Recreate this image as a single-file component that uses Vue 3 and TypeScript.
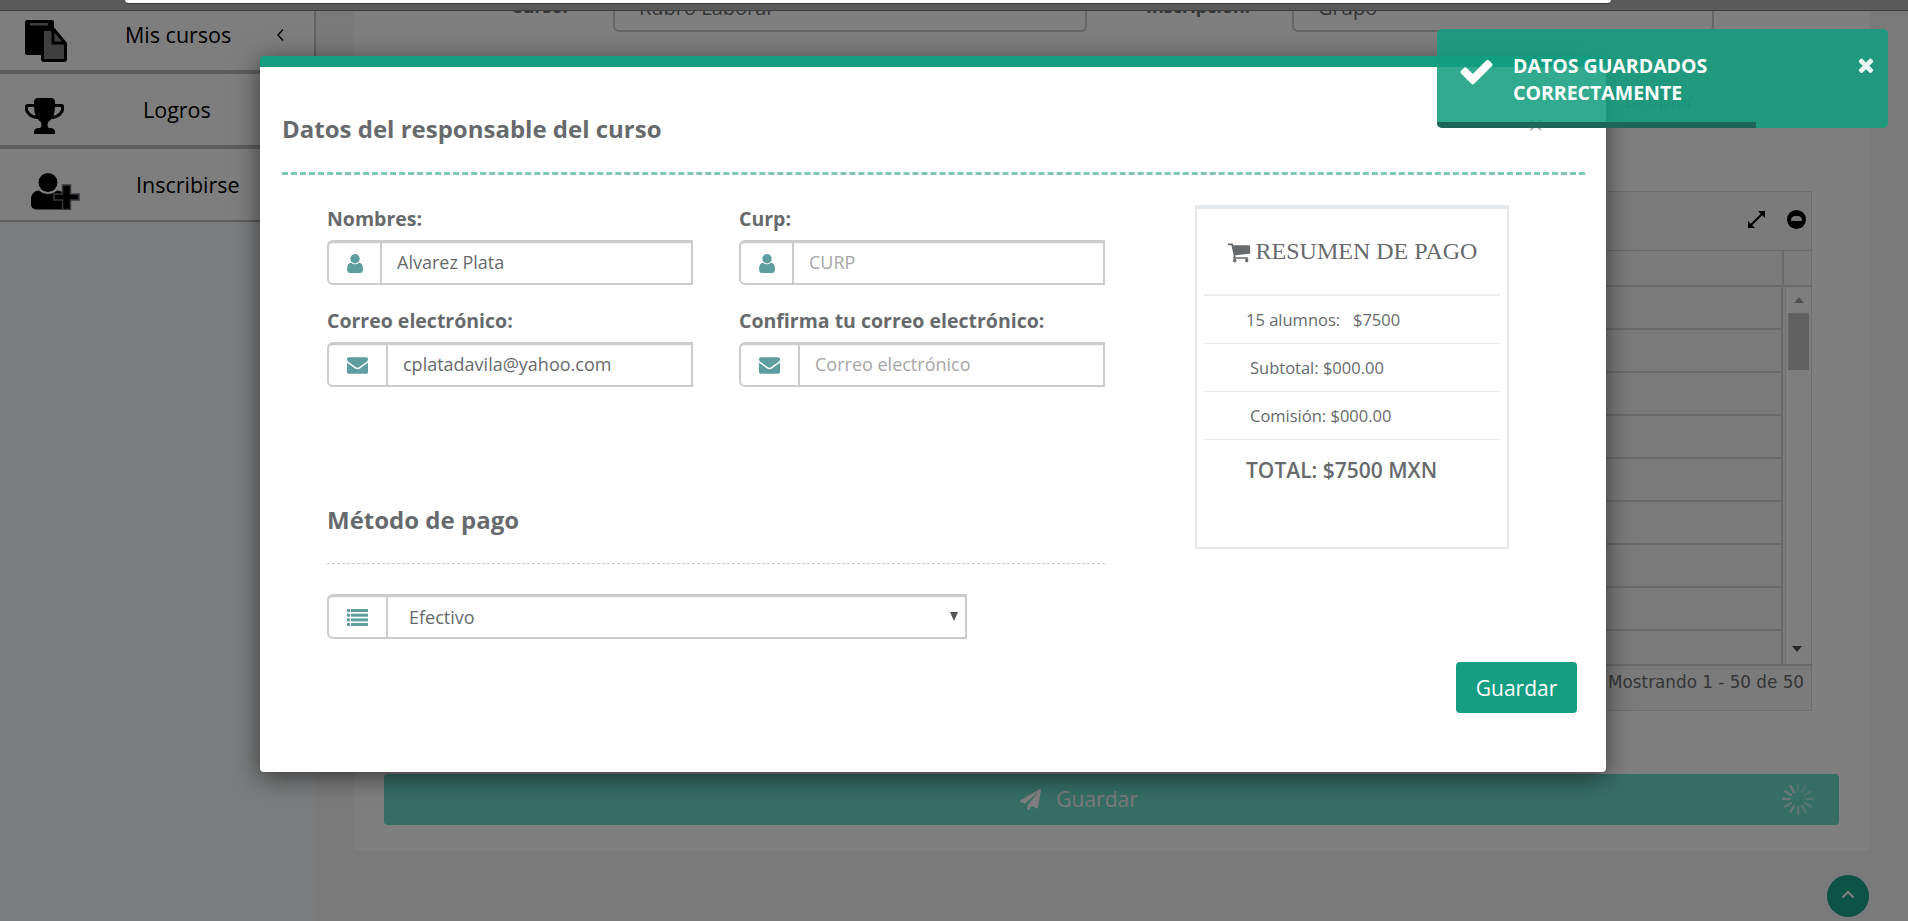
<script setup lang="ts">
import { ref } from 'vue'

interface SummaryRow {
  text: string
  cls: string
}

const nombres = ref('Alvarez Plata')
const correo = ref('cplatadavila@yahoo.com')
const curp = ref('')
const confirma = ref('')
const metodo = ref('Efectivo')

const summary: SummaryRow[] = [
  { text: '15 alumnos:\u00a0\u00a0 $7500', cls: 'first' },
  { text: 'Subtotal: $000.00', cls: '' },
  { text: 'Comisión: $000.00', cls: '' }
]

const tableRows = [1, 2, 3, 4, 5, 6, 7, 8, 9]
const ticks = Array.from({ length: 12 }, (_, i) => ({ angle: i * 30, opacity: 0.25 + (i / 12) * 0.55 }))

const userPath = 'M1536 1399q0 109-62.5 187t-150.5 78h-854q-88 0-150.5-78t-62.5-187q0-85 8.5-160.5t31.5-152 58.5-131 94-89 134.5-34.5q131 128 313 128t313-128q76 0 134.5 34.5t94 89 58.5 131 31.5 152 8.5 160.5zm-256-887q0 159-112.5 271.5t-271.5 112.5-271.5-112.5-112.5-271.5 112.5-271.5 271.5-112.5 271.5 112.5 112.5 271.5z'
const mailPath = 'M1792 710v794q0 66-47 113t-113 47h-1472q-66 0-113-47t-47-113v-794q44 49 101 87 362 246 497 345 57 42 92.5 65.5t94.5 48 110 24.5h2q51 0 110-24.5t94.5-48 92.5-65.5q170-123 498-345 57-39 100-87zm0-294q0 79-49 151t-122 123q-376 261-468 325-10 7-42.5 30.5t-54 38-52 32.5-57.5 27-50 9h-2q-23 0-50-9t-57.5-27-52-32.5-54-38-42.5-30.5q-91-64-262-182.5t-205-142.5q-62-42-117-115.5t-55-136.5q0-78 41.5-130t118.5-52h1472q65 0 112.5 47t47.5 113z'
const timesPath = 'M1490 1322q0 40-28 68l-136 136q-28 28-68 28t-68-28l-294-294-294 294q-28 28-68 28t-68-28l-136-136q-28-28-28-68t28-68l294-294-294-294q-28-28-28-68t28-68l136-136q28-28 68-28t68 28l294 294 294-294q28-28 68-28t68 28l136 136q28 28 28 68t-28 68l-294 294 294 294q28 28 28 68z'
</script>

<template>
  <div class="page">
    <div class="topbar"></div>
    <div class="layout">
      <aside class="sidebar">
        <div class="nav-item nav-cursos">
          <svg class="nav-icon" width="42" height="42" viewBox="0 0 42 42">
            <path d="M2 0h25a2 2 0 0 1 2 2v33H2a2 2 0 0 1-2-2V2a2 2 0 0 1 2-2z" fill="#000" />
            <rect x="5" y="3" width="18" height="2.5" fill="#7e7e7e" />
            <path d="M18 9.5h11l11.5 14V39a1.5 1.5 0 0 1-1.500 1.500H19a1.500 1.500 0 0 1-1.500-1.500V10z" fill="#7e7e7e" stroke="#000" stroke-width="3" />
            <path d="M28 10v13h12" fill="none" stroke="#000" stroke-width="3" />
          </svg>
          <span class="nav-label">Mis cursos</span>
          <svg class="nav-chevron" width="9" height="14" viewBox="0 0 9 14"><path d="M7 1.5 2 7l5 5.5" fill="none" stroke="#000" stroke-width="1.4" /></svg>
        </div>
        <div class="nav-item nav-logros">
          <svg class="nav-icon" width="39" height="36" viewBox="64 128 1664 1536" preserveAspectRatio="none">
            <path d="M522 883q-74-162-74-371h-256v96q0 78 94.5 162t235.5 113zm1078-275v-96h-256q0 209-74 371 141-29 235.5-113t94.5-162zm128-128v128q0 71-41.5 143t-112 130-173 97.5-215.5 44.5q-42 54-95 95-38 34-52.5 72.5t-14.5 89.5q0 54 30.5 91t97.5 37q75 0 133.5 45.5t58.5 114.5v64q0 14-9 23t-23 9h-832q-14 0-23-9t-9-23v-64q0-69 58.5-114.5t133.5-45.5q67 0 97.5-37t30.5-91q0-51-14.5-89.5t-52.5-72.5q-53-41-95-95-113-5-215.5-44.5t-173-97.5-112-130-41.5-143v-128q0-40 28-68t68-28h288v-96q0-66 47-113t113-47h576q66 0 113 47t47 113v96h288q40 0 68 28t28 68z" fill="#000" />
          </svg>
          <span class="nav-label">Logros</span>
        </div>
        <div class="nav-item nav-inscribir">
          <svg class="nav-icon" width="49" height="37" viewBox="0 0 49 37">
            <ellipse cx="17" cy="9.5" rx="9.5" ry="9.5" fill="#000" />
            <path d="M5 36.500a5 5 0 0 1-5-5v-5c0-5 3-9 8-9 2.500 2.500 6 3.500 9 3.500s6.500-1 9-3.500c5 0 9 4 9 9v10z" fill="#000" />
            <path d="M31.500 12h8v9H48v6h-8.500v9.500h-8V27H23v-6h8.500z" fill="#000" stroke="#6b7378" stroke-width="1.500" />
          </svg>
          <span class="nav-label">Inscribirse</span>
        </div>
      </aside>

      <main class="main">
        <section class="panel">
          <div class="filters">
            <label class="filter-label filter-curso">Curso:</label>
            <div class="filter-input filter-input-curso">Rubro Laboral</div>
            <label class="filter-label filter-insc">Inscripción:</label>
            <div class="filter-input filter-input-grupo">Grupo</div>
          </div>
          <div class="filter-actions"><button class="btn-clear" type="button">Limpiar</button></div>

          <div class="grid-box">
            <div class="grid-head">
              <svg width="17" height="17" viewBox="0 0 17 17">
                <path d="M3 14 14 3" fill="none" stroke="#000" stroke-width="2" />
                <path d="M10 0h7v7zM7 17H0v-7z" fill="#000" />
              </svg>
              <span class="collapse-btn"><i></i></span>
            </div>
            <div class="grid-cols"><div class="col-main"></div><div class="col-side"></div></div>
            <div class="grid-body">
              <div class="grid-rows">
                <div v-for="r in tableRows" :key="r" class="grid-row"></div>
              </div>
              <div class="scrollbar">
                <i class="arrow-up"></i>
                <div class="thumb"></div>
                <i class="arrow-down"></i>
              </div>
            </div>
            <div class="grid-foot">Mostrando 1 - 50 de 50</div>
          </div>

          <div class="save-bar">
            <svg width="21" height="21" viewBox="0 0 1792 1792">
              <path d="M1764 11q33 24 27 64l-256 1536q-5 29-32 45-14 8-31 8-11 0-24-5l-453-185-242 295q-18 23-49 23-13 0-22-4-19-7-30.5-23.5t-11.5-36.5v-349l864-1059-1069 925-395-162q-37-14-40-55-2-40 32-59l1664-960q15-9 32-9 20 0 36 11z" fill="#fff" />
            </svg>
            <span>Guardar</span>
            <svg class="spinner" width="32" height="32" viewBox="0 0 32 32">
              <line v-for="t in ticks" :key="t.angle" x1="16" y1="1" x2="16" y2="8" stroke="#fff" stroke-width="2.4" stroke-linecap="round" :opacity="t.opacity" :transform="`rotate(${t.angle} 16 16)`" />
            </svg>
          </div>
        </section>
      </main>
    </div>

    <button class="to-top" type="button">
      <svg width="14" height="9" viewBox="0 0 14 9"><path d="M1.5 7.5 7 2l5.5 5.5" fill="none" stroke="#fff" stroke-width="2" /></svg>
    </button>

    <div class="scrim"></div>
    <div class="address-strip"></div>

    <div class="modal">
      <button class="modal-close" type="button">×</button>
      <h2 class="modal-title">Datos del responsable del curso</h2>
      <div class="modal-rule"></div>
      <div class="modal-body">
        <div class="form-col">
          <div class="fields">
            <div class="field">
              <label>Nombres:</label>
              <div class="input-group">
                <span class="addon">
                  <svg width="16" height="19" viewBox="256 128 1280 1536"><path :d="userPath" fill="#5f9ea0" /></svg>
                </span>
                <input v-model="nombres" type="text" />
              </div>
            </div>
            <div class="field">
              <label>Curp:</label>
              <div class="input-group">
                <span class="addon">
                  <svg width="16" height="19" viewBox="256 128 1280 1536"><path :d="userPath" fill="#5f9ea0" /></svg>
                </span>
                <input v-model="curp" type="text" placeholder="CURP" />
              </div>
            </div>
            <div class="field">
              <label>Correo electrónico:</label>
              <div class="input-group">
                <span class="addon addon-wide">
                  <svg width="21" height="17" viewBox="0 256 1792 1408"><path :d="mailPath" fill="#5f9ea0" /></svg>
                </span>
                <input v-model="correo" type="text" />
              </div>
            </div>
            <div class="field">
              <label>Confirma tu correo electrónico:</label>
              <div class="input-group">
                <span class="addon addon-wide">
                  <svg width="21" height="17" viewBox="0 256 1792 1408"><path :d="mailPath" fill="#5f9ea0" /></svg>
                </span>
                <input v-model="confirma" type="text" placeholder="Correo electrónico" />
              </div>
            </div>
          </div>

          <h3 class="pay-title">Método de pago</h3>
          <div class="input-group select-group">
            <span class="addon addon-wide">
              <svg width="21" height="17" viewBox="0 0 21 17" fill="#5f9ea0">
                <rect x="0" y="0" width="3" height="3" /><rect x="4" y="0" width="17" height="3" />
                <rect x="0" y="4.7" width="3" height="3" /><rect x="4" y="4.7" width="17" height="3" />
                <rect x="0" y="9.4" width="3" height="3" /><rect x="4" y="9.4" width="17" height="3" />
                <rect x="0" y="14" width="3" height="3" /><rect x="4" y="14" width="17" height="3" />
              </svg>
            </span>
            <select v-model="metodo">
              <option>Efectivo</option>
              <option>Tarjeta</option>
            </select>
            <i class="select-caret"></i>
          </div>
        </div>

        <aside class="summary">
          <h3 class="summary-title">
            <svg width="24" height="24" viewBox="0 0 1792 1792"><path d="M704 1536q0 52-38 90t-90 38-90-38-38-90 38-90 90-38 90 38 38 90zm896 0q0 52-38 90t-90 38-90-38-38-90 38-90 90-38 90 38 38 90zm128-1088v512q0 24-16.5 42.5t-40.5 21.5l-1044 122q13 60 13 70 0 16-24 64h920q26 0 45 19t19 45-19 45-45 19h-1024q-26 0-45-19t-19-45q0-11 8-31.5t16-36 21.5-40 15.5-29.5l-177-823h-204q-26 0-45-19t-19-45 19-45 45-19h256q16 0 28.5 6.5t19.5 15.5 13 24.5 8 26 5.5 29.5 4.5 26h1201q26 0 45 19t19 45z" fill="#676a6c" /></svg>
            RESUMEN DE PAGO
          </h3>
          <div v-for="row in summary" :key="row.text" class="summary-row" :class="row.cls">{{ row.text }}</div>
          <div class="summary-total">TOTAL: $7500 MXN</div>
        </aside>
      </div>
      <div class="modal-foot">
        <button class="btn-save" type="button">Guardar</button>
      </div>
    </div>

    <div class="toast">
      <svg class="toast-check" width="37" height="37" viewBox="0 0 1792 1792">
        <path d="M1671 566q0 40-28 68l-724 724-136 136q-28 28-68 28t-68-28l-136-136-362-362q-28-28-28-68t28-68l136-136q28-28 68-28t68 28l294 295 656-657q28-28 68-28t68 28l136 136q28 28 28 68z" fill="#fff" />
      </svg>
      <div class="toast-text">DATOS GUARDADOS<br />CORRECTAMENTE</div>
      <svg class="toast-close" width="22" height="22" viewBox="0 0 1792 1792"><path :d="timesPath" fill="#fff" fill-opacity="0.9" /></svg>
      <div class="toast-progress"></div>
    </div>
  </div>
</template>

<style>
html,
body {
  margin: 0;
  overflow: hidden;
}
</style>

<style scoped>
.page {
  position: relative;
  height: 921px;
  overflow: hidden;
  display: flex;
  flex-direction: column;
  font-family: "Open Sans", "Liberation Sans", sans-serif;
  color: #676a6c;
  background: #f4f4f4;
}

.topbar {
  height: 10px;
  flex: none;
  background: #b4b4b4;
  border-bottom: 1px solid #7c7c7c;
}

.layout {
  flex: 1;
  display: flex;
  min-height: 0;
}

.sidebar {
  width: 316px;
  flex: none;
  background: #f6f8fb;
}

.nav-item {
  display: flex;
  align-items: flex-start;
  box-sizing: border-box;
  background: #fcfcfc;
  border-right: 2px solid #c2c2c2;
  border-bottom: 4px solid #bbb;
  height: 75px;
  color: #000;
}

.nav-cursos {
  height: 63px;
}

.nav-inscribir {
  height: 73px;
  border-bottom-width: 2px;
}

.nav-icon {
  margin: 9px 0 0 25px;
  flex: none;
}

.nav-logros .nav-icon {
  margin-top: 24px;
}

.nav-inscribir .nav-icon {
  margin-top: 24px;
  margin-left: 31px;
}

.nav-label {
  font-size: 21.5px;
  line-height: 28px;
  margin-top: 10px;
}

.nav-cursos .nav-label {
  margin-left: 58px;
}

.nav-logros .nav-label {
  margin-left: 79px;
  margin-top: 22px;
}

.nav-inscribir .nav-label {
  margin-left: 56px;
  margin-top: 22px;
}

.nav-chevron {
  margin: 17px 0 0 45px;
}

.main {
  flex: 1;
  min-width: 0;
  overflow: hidden;
}

.panel {
  margin: -23px 39px 0 38px;
  padding: 0 30px 25px;
  background: #fff;
}

.filters {
  display: flex;
  align-items: center;
  height: 44px;
}

.filter-label {
  font-size: 18px;
  font-weight: 700;
  margin-top: -8px;
}

.filter-curso {
  margin-left: 127px;
  width: 102px;
}

.filter-insc {
  margin-left: 59px;
  width: 146px;
}

.filter-input {
  box-sizing: border-box;
  height: 44px;
  border: 2px solid #ccc;
  border-radius: 6px;
  padding: 0 24px;
  line-height: 36px;
  font-size: 20px;
}

.filter-input-curso {
  width: 474px;
}

.filter-input-grupo {
  width: 422px;
}

.filter-actions {
  display: flex;
  padding: 48px 127px 0 0;
  justify-content: flex-end;
}

.btn-clear {
  width: 105px;
  height: 40px;
  border: 1px solid #ddd;
  border-radius: 4px;
  background: #fff;
  color: #a8a8a8;
  font: 20px "Open Sans", sans-serif;
}

.grid-box {
  margin: 71px 27px 0 0;
  border: 1px solid #ddd;
  background: #f6f6f6;
}

.grid-head {
  height: 59px;
  display: flex;
  align-items: center;
  justify-content: flex-end;
  gap: 22px;
  padding-right: 5px;
  border-bottom: 1px solid #d4d4d4;
  box-sizing: border-box;
  padding-bottom: 3px;
}

.collapse-btn {
  position: relative;
  width: 19px;
  height: 19px;
  border-radius: 50%;
  background: #000;
  display: block;
}

.collapse-btn i {
  position: absolute;
  left: 4px;
  top: 6px;
  width: 11px;
  height: 5px;
  background: #e8e8e8;
  border-radius: 5px 5px 1px 1px;
}

.grid-cols {
  display: flex;
  height: 34px;
  border-bottom: 2px solid #d4d4d4;
}

.col-main {
  flex: 1;
  border-right: 2px solid #d4d4d4;
}

.col-side {
  width: 27px;
}

.grid-body {
  display: flex;
  height: 377px;
  overflow: hidden;
}

.grid-rows {
  flex: 1;
  border-right: 2px solid #d4d4d4;
}

.grid-row {
  box-sizing: border-box;
  height: 43px;
  border-bottom: 2px solid #d4d4d4;
}

.scrollbar {
  width: 25px;
  margin-left: 2px;
  border-left: 1px solid #e4e4e4;
  background: #fdfdfd;
  display: flex;
  flex-direction: column;
  align-items: center;
  position: relative;
}

.arrow-up {
  margin-top: 10px;
  border: 5.5px solid transparent;
  border-top: 0;
  border-bottom: 6px solid #a3a3a3;
}

.thumb {
  position: absolute;
  top: 26px;
  left: 2px;
  width: 21px;
  height: 57px;
  background: #c2c2c2;
}

.arrow-down {
  position: absolute;
  bottom: 12px;
  left: 6px;
  border: 5.5px solid transparent;
  border-bottom: 0;
  border-top: 6px solid #505050;
}

.grid-foot {
  box-sizing: border-box;
  height: 46px;
  border-top: 2px solid #d4d4d4;
  font-family: "DejaVu Sans", sans-serif;
  font-size: 16.8px;
  line-height: 33px;
  text-align: right;
  padding-right: 7px;
}

.save-bar {
  position: relative;
  box-sizing: border-box;
  height: 51px;
  margin-top: 63px;
  border-radius: 4px;
  background: #6cdcc8;
  color: #f4f4f4;
  display: flex;
  align-items: center;
  justify-content: center;
  gap: 15px;
  font-size: 21px;
  padding: 0 65px 1px 0;
}

.spinner {
  position: absolute;
  right: 25px;
  top: 9px;
}

.to-top {
  position: absolute;
  left: 1827px;
  top: 875px;
  width: 42px;
  height: 42px;
  padding: 0 0 4px;
  border: 0;
  border-radius: 50%;
  background: #16a88a;
  display: flex;
  align-items: center;
  justify-content: center;
}

.scrim {
  position: absolute;
  inset: 0;
  background: rgba(0, 0, 0, 0.5);
}

.address-strip {
  position: absolute;
  left: 125px;
  top: 0;
  width: 1486px;
  height: 3px;
  background: #fff;
  border-bottom: 1px solid #333;
  border-radius: 0 0 4px 4px;
}

.modal {
  position: absolute;
  left: 260px;
  top: 56px;
  width: 1346px;
  height: 716px;
  box-sizing: border-box;
  background: #fff;
  border-top: 11px solid #159e82;
  border-radius: 4px;
  padding: 0 21px 0 22px;
  box-shadow: 0 5px 26px rgba(0, 0, 0, 0.55);
}

.modal-close {
  position: absolute;
  right: 63px;
  top: 44px;
  padding: 0;
  border: 0;
  background: none;
  color: #a8a8a8;
  font: 26px/26px "Open Sans", sans-serif;
}

.modal-title {
  margin: 0;
  padding-top: 45px;
  font-size: 24px;
  font-weight: 700;
  line-height: 34px;
  color: #676a6c;
}

.modal-rule {
  margin-top: 26px;
  border-top: 3px dashed #7cc9b7;
}

.modal-body {
  display: flex;
  padding: 31px 0 0 45px;
}

.form-col {
  width: 778px;
  flex: none;
}

.fields {
  display: grid;
  grid-template-columns: 366px 366px;
  column-gap: 46px;
  row-gap: 23px;
}

.field label {
  display: block;
  font-size: 19.5px;
  font-weight: 700;
  line-height: 26px;
  margin-bottom: 8px;
}

.input-group {
  position: relative;
  box-sizing: border-box;
  display: flex;
  height: 45px;
  border: 2px solid #ccc;
  border-top-width: 3px;
  border-radius: 6px 0 0 6px;
  box-shadow: inset 0 1px 1px rgba(0, 0, 0, 0.05);
}

.addon {
  width: 51px;
  flex: none;
  display: flex;
  align-items: center;
  justify-content: center;
  border-right: 2px solid #ccc;
}

.addon-wide {
  width: 57px;
}

.input-group input,
.input-group select {
  flex: 1;
  min-width: 0;
  border: 0;
  outline: none;
  background: transparent;
  padding: 0 15px;
  font: 18px "Open Sans", sans-serif;
  color: #676a6c;
  appearance: none;
}

.input-group input {
  padding-bottom: 2px;
}

.input-group input::placeholder {
  color: #a6a6a6;
  opacity: 1;
}

.pay-title {
  margin: 116px 0 0;
  padding-bottom: 27px;
  border-bottom: 1px dashed #ccc;
  font-size: 24px;
  font-weight: 700;
  line-height: 33px;
}

.select-group {
  width: 640px;
  margin-top: 30px;
}

.input-group select {
  padding-left: 21px;
}

.select-caret {
  position: absolute;
  right: 7px;
  top: 15px;
  border: 4.5px solid transparent;
  border-bottom: 0;
  border-top: 9px solid #555;
}

.summary {
  box-sizing: border-box;
  width: 314px;
  height: 344px;
  margin: -1px 0 0 90px;
  border: 2px solid #e7eaec;
  border-top-width: 4px;
  padding: 0 7px;
}

.summary-title {
  margin: 0;
  height: 85px;
  display: flex;
  align-items: center;
  justify-content: center;
  gap: 5px;
  border-bottom: 2px solid #eee;
  font-family: "Liberation Serif", serif;
  font-size: 24px;
  font-weight: 400;
  color: #676a6c;
}

.summary-row {
  height: 48px;
  box-sizing: border-box;
  border-bottom: 1px solid #e7eaec;
  font-size: 16.5px;
  line-height: 47px;
  padding-left: 46px;
}

.summary-row.first {
  padding-left: 42px;
}

.summary-total {
  padding: 16px 0 0 42px;
  font-size: 21px;
  font-weight: 600;
  line-height: 28px;
}

.modal-foot {
  display: flex;
  justify-content: flex-end;
  padding: 23px 8px 0 0;
}

.btn-save {
  width: 121px;
  height: 51px;
  border: 0;
  border-radius: 4px;
  background: #159e82;
  color: #fff;
  font: 21px "Open Sans", sans-serif;
}

.toast {
  position: absolute;
  left: 1437px;
  top: 29px;
  width: 451px;
  height: 99px;
  box-sizing: border-box;
  display: flex;
  align-items: flex-start;
  padding: 24px 0 0 21px;
  background: rgba(20, 157, 128, 0.87);
  border-radius: 5px;
  overflow: hidden;
  color: #fff;
}

.toast-check {
  flex: none;
}

.toast-text {
  margin: -1px 0 0 18px;
  font-size: 19.5px;
  font-weight: 700;
  line-height: 27px;
}

.toast-close {
  position: absolute;
  right: 11px;
  top: 25px;
}

.toast-progress {
  position: absolute;
  left: 0;
  bottom: 0;
  width: 70.7%;
  height: 6px;
  background: #1c6657;
}
</style>
